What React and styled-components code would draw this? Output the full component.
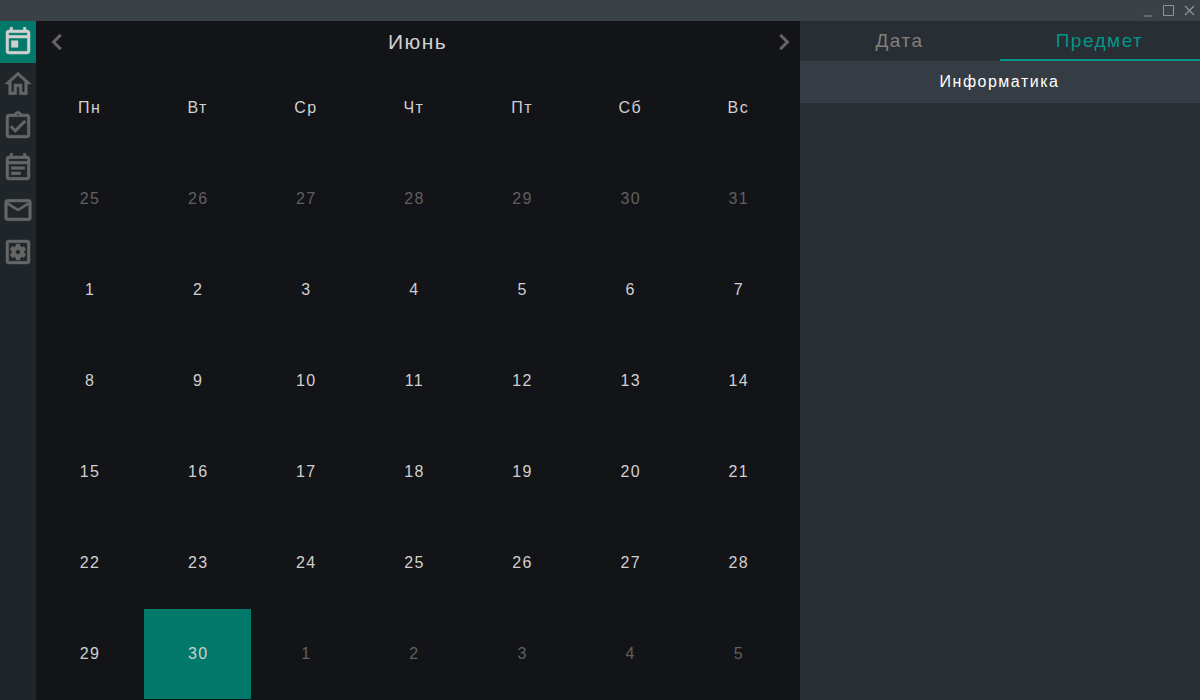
import React from 'react';
import styled, { createGlobalStyle, css } from 'styled-components';
import {
  MdOutlineToday,
  MdOutlineHome,
  MdOutlineAssignmentTurnedIn,
  MdOutlineEventNote,
  MdOutlineEmail,
  MdOutlineSettingsApplications,
  MdChevronLeft,
  MdChevronRight,
} from 'react-icons/md';

const GlobalStyle = createGlobalStyle`
  * { box-sizing: border-box; }
  body {
    margin: 0;
    background: #131417;
    font-family: "Liberation Sans", Arial, sans-serif;
    overflow: hidden;
  }
`;

const boldIcon = css`
  svg {
    stroke-width: 0.35px;
  }

  path[fill='none'] {
    stroke: none;
  }
`;

const Window = styled.div`
  display: flex;
  flex-direction: column;
  width: 1200px;
  height: 700px;
  letter-spacing: 1.4px;
  cursor: default;
`;

const TitleBar = styled.header`
  flex: none;
  display: flex;
  justify-content: flex-end;
  height: 21px;
  background: #3a4147;
`;

const WindowButton = styled.button`
  display: flex;
  align-items: center;
  justify-content: center;
  width: 21px;
  height: 21px;
  padding: 0;
  border: 0;
  background: none;
  color: #929292;
`;

const Body = styled.div`
  flex: 1;
  display: flex;
  min-height: 0;
`;

const Sidebar = styled.nav`
  flex: none;
  width: 36px;
  background: #202529;
`;

const NavItem = styled.a`
  display: flex;
  align-items: center;
  justify-content: center;
  height: 42px;
  font-size: 32px;
  color: ${(p) => (p.$active ? '#d0d0d0' : '#666666')};
  background: ${(p) => (p.$active ? '#00796b' : 'transparent')};
  ${boldIcon}
`;

const Calendar = styled.main`
  flex: none;
  width: 764px;
  background: #131417;
`;

const MonthBar = styled.div`
  display: flex;
  align-items: center;
  height: 42px;
  padding-left: 5px;
`;

const Arrow = styled.button`
  flex: none;
  display: flex;
  padding: 0;
  border: 0;
  background: none;
  font-size: 32px;
  color: #666666;
  ${boldIcon}
`;

const Month = styled.h1`
  flex: 1;
  margin: 0;
  padding-right: 6px;
  font-size: 21px;
  font-weight: 400;
  text-align: center;
  color: #d0d0d0;
`;

const Days = styled.div`
  display: grid;
  grid-template-columns: repeat(7, 107.14px);
  grid-auto-rows: 90px;
  gap: 1px;
`;

const Cell = styled.div`
  display: flex;
  align-items: center;
  justify-content: center;
  font-size: 16px;
  color: #d0d0d0;
`;

const DateCell = styled(Cell)`
  padding-left: 1px;
  color: ${(p) => (p.$muted ? '#606060' : '#d0d0d0')};
  background: ${(p) => (p.$selected ? '#00796b' : 'transparent')};
`;

const Panel = styled.aside`
  flex: 1;
  background: #292d34;
`;

const Tabs = styled.div`
  display: flex;
  height: 40px;
`;

const Tab = styled.button`
  flex: 1;
  padding: 2px 1px 0 0;
  border: 0;
  border-bottom: 2px solid ${(p) => (p.$active ? '#009688' : 'transparent')};
  background: none;
  font: inherit;
  font-size: 19px;
  letter-spacing: 1.5px;
  color: ${(p) => (p.$active ? '#009688' : '#808080')};
`;

const Subject = styled.div`
  display: flex;
  align-items: center;
  justify-content: center;
  height: 42px;
  padding-right: 1px;
  background: #363c43;
  font-size: 16px;
  letter-spacing: 1.5px;
  color: #ffffff;
`;

const NAV = [
  MdOutlineToday,
  MdOutlineHome,
  MdOutlineAssignmentTurnedIn,
  MdOutlineEventNote,
  MdOutlineEmail,
  MdOutlineSettingsApplications,
];

const WEEKDAYS = ['Пн', 'Вт', 'Ср', 'Чт', 'Пт', 'Сб', 'Вс'];

const range = (from, to) => Array.from({ length: to - from + 1 }, (_, i) => from + i);

const DATES = [
  ...range(25, 31).map((day) => ({ day, muted: true })),
  ...range(1, 30).map((day) => ({ day, selected: day === 30 })),
  ...range(1, 5).map((day) => ({ day, muted: true })),
];

const Glyph = ({ children }) => (
  <svg width="21" height="21" viewBox="0 0 21 21" fill="none" stroke="currentColor">
    {children}
  </svg>
);

export default function App() {
  return (
    <>
      <GlobalStyle />
      <Window>
        <TitleBar>
          <WindowButton aria-label="Свернуть">
            <Glyph><path d="M6.5 16h9" /></Glyph>
          </WindowButton>
          <WindowButton aria-label="Развернуть">
            <Glyph><path d="M5.5 5.5h10v10h-10z" /></Glyph>
          </WindowButton>
          <WindowButton aria-label="Закрыть">
            <Glyph><path strokeWidth="1.2" d="M6 6l9 9M15 6l-9 9" /></Glyph>
          </WindowButton>
        </TitleBar>
        <Body>
          <Sidebar>
            {NAV.map((Icon, i) => (
              <NavItem key={i} $active={i === 0}><Icon /></NavItem>
            ))}
          </Sidebar>
          <Calendar>
            <MonthBar>
              <Arrow aria-label="Назад"><MdChevronLeft /></Arrow>
              <Month>Июнь</Month>
              <Arrow aria-label="Вперёд"><MdChevronRight /></Arrow>
            </MonthBar>
            <Days>
              {WEEKDAYS.map((name) => <Cell key={name}>{name}</Cell>)}
              {DATES.map(({ day, muted, selected }, i) => (
                <DateCell key={i} $muted={muted} $selected={selected}>{day}</DateCell>
              ))}
            </Days>
          </Calendar>
          <Panel>
            <Tabs>
              <Tab>Дата</Tab>
              <Tab $active>Предмет</Tab>
            </Tabs>
            <Subject>Информатика</Subject>
          </Panel>
        </Body>
      </Window>
    </>
  );
}
